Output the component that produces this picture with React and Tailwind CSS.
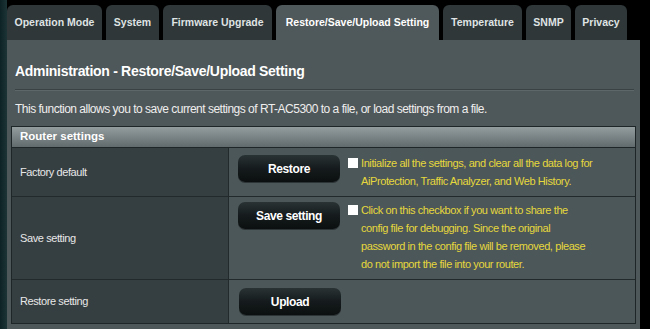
import React from "react";

const tabs = [
  { label: "Operation Mode", w: "w-[95px]" },
  { label: "System", w: "w-[53px]" },
  { label: "Firmware Upgrade", w: "w-[109px]" },
  { label: "Restore/Save/Upload Setting", w: "w-[163px]", active: true },
  { label: "Temperature", w: "w-[79px]" },
  { label: "SNMP", w: "w-[45px]" },
  { label: "Privacy", w: "w-[52px]" },
];

function Btn({ children }) {
  return (
    <div className="w-[102px] h-[27px] shrink-0 rounded-[7px] bg-gradient-to-b from-[#2a3334] via-[#151b1c] to-[#0b0f10] flex items-center justify-center text-white font-bold text-[12px] shadow-[0_1px_0_rgba(0,0,0,0.4)]">
      {children}
    </div>
  );
}

function Check() {
  return <div className="w-[10px] h-[10px] bg-white shrink-0 mt-[3px]" />;
}

export default function App() {
  return (
    <div
      className="w-[650px] h-[329px] bg-black flex overflow-hidden"
      style={{ fontFamily: '"Liberation Sans", Arial, sans-serif' }}
    >
      <div className="w-[7px] h-full bg-gradient-to-r from-[#0c2224] to-[#1d3436]" />
      <div className="w-[633px] flex flex-col">
        <div className="h-[40px] pt-[5px] flex gap-[4px]">
          {tabs.map((t) => (
            <div
              key={t.label}
              className={`${t.w} h-[35px] rounded-t-[6px] flex items-center justify-center text-[10.5px] font-bold ${
                t.active
                  ? "bg-[#4f585a] text-white"
                  : "bg-[#2f3739] text-[#dfe3e3]"
              }`}
            >
              {t.label}
            </div>
          ))}
        </div>
        <div className="flex-1 bg-[#4e5759] flex flex-col">
          <div className="px-[8px] pt-[22px]">
            <div className="text-white font-bold text-[14px] leading-[18px] tracking-[-0.3px]">
              Administration - Restore/Save/Upload Setting
            </div>
            <div className="mt-[9px] mr-[-2px] h-[2px] border-t border-[#3a4244] border-b-[#5d6668] border-b" />
            <div className="mt-[10px] text-[#eeeeee] text-[12px] leading-[16px] tracking-[-0.5px]">
              This function allows you to save current settings of RT-AC5300 to a file, or load settings from a file.
            </div>
          </div>
          <div className="mt-[9px] mx-[4px] border border-[#1f2628]">
            <div className="h-[21px] bg-gradient-to-b from-[#949d9e] to-[#616b6d] border-b border-[#1f2628] flex items-center pl-[8px] text-white font-bold text-[11.5px]">
              Router settings
            </div>
            <div className="grid grid-cols-[217px_1fr] text-[11px] tracking-[-0.4px]">
              <div className="bg-[#353e41] border-r border-b border-[#232a2c] flex items-center pl-[8px] text-[#e8e8e8]">
                Factory default
              </div>
              <div className="bg-[#4c575a] border-b border-[#232a2c] pl-[9px] pt-[7px] pb-[6px] flex">
                <Btn>Restore</Btn>
                <div className="ml-[8px] flex gap-[3px]">
                  <Check />
                  <div className="text-[#e6d83c] leading-[17.7px]">
                    Initialize all the settings, and clear all the data log for
                    <br />
                    AiProtection, Traffic Analyzer, and Web History.
                  </div>
                </div>
              </div>

              <div className="bg-[#353e41] border-r border-b border-[#232a2c] flex items-center pl-[8px] text-[#e8e8e8]">
                Save setting
              </div>
              <div className="bg-[#4c575a] border-b border-[#232a2c] pl-[9px] pt-[5px] pb-[6px] flex">
                <Btn>Save setting</Btn>
                <div className="ml-[8px] flex gap-[3px]">
                  <Check />
                  <div className="text-[#e6d83c] leading-[17.7px]">
                    Click on this checkbox if you want to share the
                    <br />
                    config file for debugging. Since the original
                    <br />
                    password in the config file will be removed, please
                    <br />
                    do not import the file into your router.
                  </div>
                </div>
              </div>

              <div className="bg-[#353e41] border-r border-[#232a2c] flex items-center pl-[8px] text-[#e8e8e8]">
                Restore setting
              </div>
              <div className="bg-[#4c575a] pl-[10px] py-[8px] flex">
                <Btn>Upload</Btn>
              </div>
            </div>
          </div>
        </div>
      </div>
      <div className="w-[10px] h-full bg-black" />
    </div>
  );
}
